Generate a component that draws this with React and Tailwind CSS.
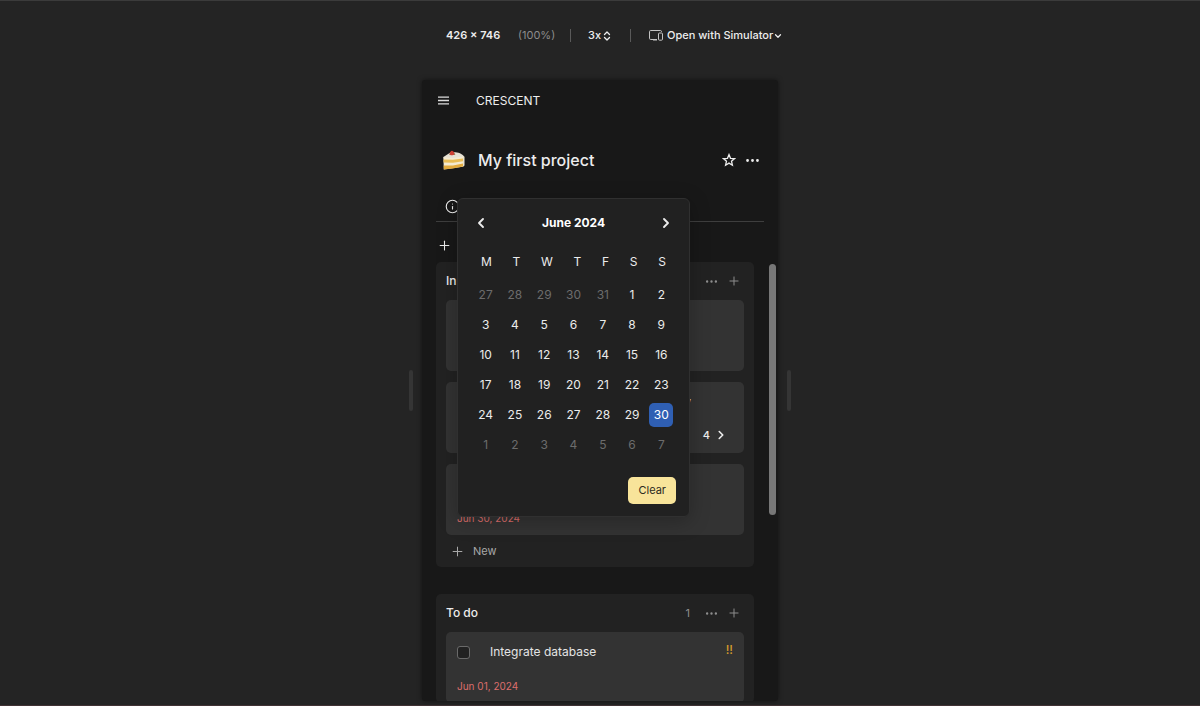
import { ChevronDown, ChevronLeft, ChevronRight, ChevronsUpDown, Ellipsis, Info, Plus } from "lucide-react";

const weekdays = ["M", "T", "W", "T", "F", "S", "S"];
const weeks = [
  [27, 28, 29, 30, 31, 1, 2],
  [3, 4, 5, 6, 7, 8, 9],
  [10, 11, 12, 13, 14, 15, 16],
  [17, 18, 19, 20, 21, 22, 23],
  [24, 25, 26, 27, 28, 29, 30],
  [1, 2, 3, 4, 5, 6, 7],
];

function dayClass(week, day) {
  const outside = (week === 0 && day > 7) || week === 5;
  if (outside) return "text-[#6c6c6c]";
  if (week === 4 && day === 30) return "bg-[#2f5fb3] text-white";
  return "text-[#ececec]";
}

function CakeIcon() {
  return (
    <svg width="22" height="20" viewBox="0 0 22 20" aria-hidden="true">
      <path d="M0.4 7 7.4 2.6C12 1.6 19 2.6 21 6.6L20 8.2 0.5 8.6Z" fill="#e6e1d4" />
      <path d="M0.4 7.2 10 8 20 6.6 21.3 6.8V15.6L19.8 16.8 0.8 19.6Z" fill="#f4ead0" />
      <path d="M0.5 9.4 10 9.8 20 8.4V11.2L10 12.8 0.6 12.6Z" fill="#e9bd55" />
      <path d="M0.7 15.6 10 15.4 20 13.6V16.6L10 18.4 0.8 19.6Z" fill="#e3ab3e" />
      <path d="M20 6.6 21.3 6.6V15.6L20 16.7Z" fill="#e8e0cc" />
      <path d="M5.8 4.4 8 3 11.4 3.2 12.4 4.8Z" fill="#5f7a3c" />
      <path d="M6.6 4.4C6.4 2.6 8 0.7 9.1 0.8 10.6 1 11.8 3 11.4 4.6 10 5.6 8 5.4 6.6 4.4Z" fill="#cd4034" />
    </svg>
  );
}

function MenuIcon() {
  return (
    <svg width="11" height="9" viewBox="0 0 11 9" stroke="#dcdcdc" strokeWidth="1.3" aria-hidden="true">
      <path d="M0 1.2H11M0 4.5H11M0 7.8H11" />
    </svg>
  );
}

function DevicesIcon() {
  return (
    <svg width="14" height="11" viewBox="0 0 14 11" fill="none" stroke="#c4c4c4" aria-hidden="true">
      <path d="M8 9.5H1.7Q0.5 9.5 0.5 8.3V1.7Q0.5 0.5 1.7 0.5H11.3Q12.5 0.5 12.5 1.7V2" />
      <path d="M4 9.8H8" strokeWidth="1.4" />
      <rect x="9.5" y="3" width="4" height="7.2" rx="1" />
    </svg>
  );
}

function StarIcon() {
  return (
    <svg width="14" height="14" viewBox="0 0 14 14" fill="none" stroke="#ededed" strokeWidth="1.3" strokeLinejoin="miter" aria-hidden="true">
      <path d="M7 1.6 8.5 5.3 12.5 5.6 9.5 8.2 10.4 12.2 7 10.1 3.6 12.2 4.5 8.2 1.5 5.6 5.5 5.3Z" />
    </svg>
  );
}

function Toolbar() {
  return (
    <header className="flex h-[69px] w-full max-w-[356px] shrink-0 items-center self-center whitespace-nowrap pl-6 text-[11px] font-medium text-[#ededed]">
      <span className="w-[72px] shrink-0 font-semibold">426 × 746</span>
      <span className="w-[52px] shrink-0 font-normal text-[#8c8c8c]">(100%)</span>
      <span className="h-[13px] w-px shrink-0 bg-[#5a5a5a]" />
      <button className="flex w-[59px] shrink-0 items-center justify-center">
        3x
        <ChevronsUpDown size={12} strokeWidth={2.6} />
      </button>
      <span className="h-[13px] w-px shrink-0 bg-[#5a5a5a]" />
      <button className="ml-[18px] flex shrink-0 items-center gap-1">
        <DevicesIcon />
        <span className="flex items-center">
          Open with Simulator
          <ChevronDown size={10} strokeWidth={3} />
        </span>
      </button>
    </header>
  );
}

function Section({ title, count, children }) {
  return (
    <section className="rounded-[5px] bg-[#222222] px-[10px]">
      <div className="flex h-[38px] items-center text-[#8e8e8e]">
        <h2 className="flex-1 text-[12px] font-medium text-[#ededed]">{title}</h2>
        <span className="mr-[14px] text-[11px]">{count}</span>
        <button aria-label={"Options for " + title} className="mr-2">
          <Ellipsis size={15} strokeWidth={1.8} />
        </button>
        <button aria-label={"Add task to " + title} className="mr-[3px]">
          <Plus size={14} strokeWidth={1.7} />
        </button>
      </div>
      {children}
    </section>
  );
}

function Card({ title, date, priority, subtasks }) {
  return (
    <article className="flex min-h-[71px] flex-col justify-between rounded-[5px] bg-[#333333] px-[11px] pb-[11px] pt-[10px]">
      <label className="flex items-center whitespace-nowrap text-[12px] leading-5 text-[#e4e4e4]">
        <input
          type="checkbox"
          className="mr-[20px] h-[13px] w-[13px] shrink-0 appearance-none rounded-[3px] border border-[#6a6a6a] bg-[#222222]"
        />
        <span className="flex-1">{title}</span>
        {priority && <span className="pb-1 text-[12px] font-medium leading-4 text-[#d39a2c]">{priority}</span>}
      </label>
      <div className="flex items-center justify-between text-[10px] leading-3 text-[#dd6e6c]">
        <span>{date}</span>
        {subtasks && (
          <button className="mr-[5px] flex items-center gap-1 text-[11px] font-medium leading-3 text-[#ededed]">
            {subtasks}
            <ChevronRight size={14} strokeWidth={2.8} />
          </button>
        )}
      </div>
    </article>
  );
}

function Calendar() {
  return (
    <div
      role="dialog"
      aria-label="Due date"
      className="absolute left-[35px] top-[118px] w-[233px] rounded-[6px] border border-[#303030] bg-[#212121] px-3 pb-3 text-[12px] text-[#ececec] shadow-[0_4px_20px_rgba(0,0,0,0.25)]"
    >
      <div className="flex h-12 items-center justify-between px-[3px]">
        <button aria-label="Previous month">
          <ChevronLeft size={16} strokeWidth={2.8} />
        </button>
        <h3 className="text-[12px] font-bold text-white">June 2024</h3>
        <button aria-label="Next month">
          <ChevronRight size={16} strokeWidth={2.8} />
        </button>
      </div>
      <table className="block">
        <thead className="block px-[11px]">
          <tr className="flex h-[30px] items-center justify-between">
            {weekdays.map((d, i) => (
              <th key={i} className="font-normal">{d}</th>
            ))}
          </tr>
        </thead>
        <tbody className="mt-[3px] block px-px">
          {weeks.map((week, w) => (
            <tr key={w} className="grid h-[30px] grid-cols-7 items-center">
              {week.map((day) => (
                <td key={day} className="flex justify-center p-0">
                  <button className={"h-6 w-6 rounded-[5px] " + dayClass(w, day)}>{day}</button>
                </td>
              ))}
            </tr>
          ))}
        </tbody>
      </table>
      <div className="mt-[17px] flex justify-end px-px">
        <button className="h-[27px] rounded-[5px] bg-[#f8e49a] px-[10px] text-[11px] text-[#2c2a22]">Clear</button>
      </div>
    </div>
  );
}

export default function App() {
  return (
    <div className="flex h-screen flex-col border-b border-t border-b-[#413234] border-t-[#3b3b3b] bg-[#242424] font-['Inter',sans-serif] text-[#ededed]">
      <Toolbar />
      <main className="mb-1 mt-[10px] flex min-h-0 flex-1 items-center justify-center gap-[9px]">
        <div className="h-[41px] w-1 rounded-sm bg-[#353535]" />
        <div className="relative h-full w-full max-w-[356px] overflow-hidden rounded-[3px] bg-[#181818] px-[14px] shadow-[0_0_5px_rgba(0,0,0,0.5)]">
          <nav className="flex h-[41px] items-center gap-[27px] pl-[2px]">
            <button aria-label="Menu">
              <MenuIcon />
            </button>
            <span className="text-[12px]">CRESCENT</span>
          </nav>
          <div className="mt-[19px] flex h-10 items-center pl-[7px]">
            <CakeIcon />
            <h1 className="ml-[13px] flex-1 text-[16px] font-medium">My first project</h1>
            <button aria-label="Favorite" className="mr-2">
              <StarIcon />
            </button>
            <button aria-label="Project options" className="mr-[3px]">
              <Ellipsis size={17} strokeWidth={2} />
            </button>
          </div>
          <div className="mt-3 flex h-[30px] items-center border-b border-[#3e3e3e] pl-[9px]">
            <button aria-label="Project info">
              <Info size={15} strokeWidth={1.8} />
            </button>
          </div>
          <div className="flex h-10 items-center pl-px">
            <button aria-label="Add section" className="mt-[7px]">
              <Plus size={15} strokeWidth={1.7} />
            </button>
          </div>
          <div className="-mr-3 flex items-start gap-[15px]">
            <div className="flex min-w-0 flex-1 flex-col gap-[27px]">
              <Section title="In progress" count="3">
                <div className="flex flex-col gap-[11px]">
                  <Card />
                  <Card title="Implement authentication for Friday" subtasks="4" />
                  <Card date="Jun 30, 2024" />
                </div>
                <button className="flex h-8 items-center gap-2 pl-1 text-[11px] text-[#a8a8a8]">
                  <Plus size={15} strokeWidth={1.6} />
                  New
                </button>
              </Section>
              <Section title="To do" count="1">
                <Card title="Integrate database" date="Jun 01, 2024" priority="!!" />
              </Section>
            </div>
            <div className="mt-[2px] h-[251px] w-[7px] rounded-full bg-[#777777]" />
          </div>
          <Calendar />
        </div>
        <div className="h-[41px] w-1 rounded-sm bg-[#353535]" />
      </main>
    </div>
  );
}
